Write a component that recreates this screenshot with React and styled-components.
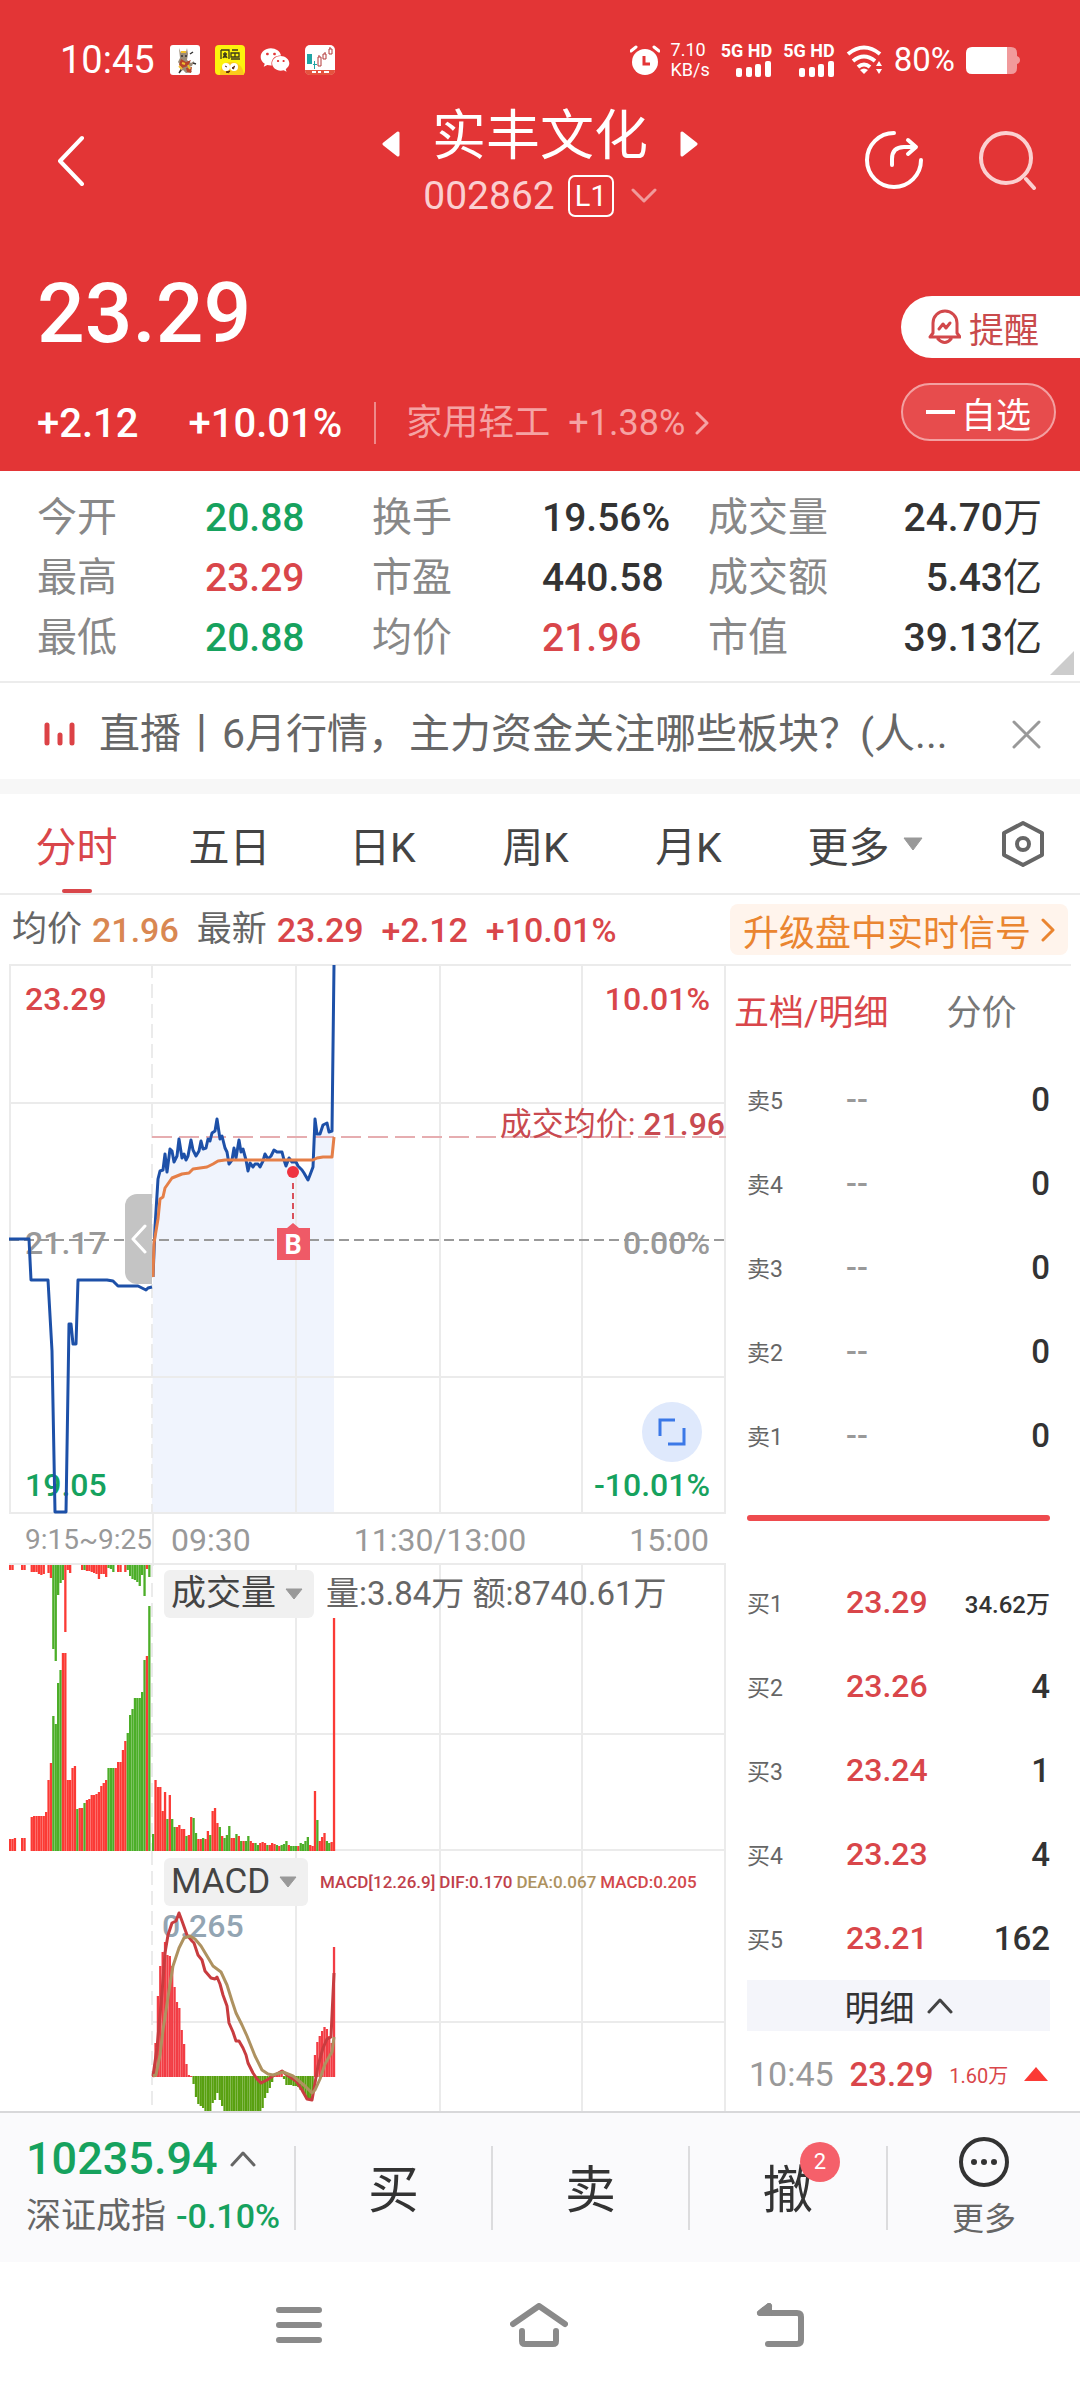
import React from 'react'
import styled, { createGlobalStyle } from 'styled-components'
import { FaWeixin } from 'react-icons/fa'

const RED = '#d9464a'
const GREEN = '#16a25e'
const UP = '#fb3a35'
const DOWN = '#4cae28'

const GlobalStyle = createGlobalStyle`
* {
  box-sizing: border-box;
}
body {
  margin: 0;
  background: #fff;
  color: #333;
  font-family: Roboto, "Noto Sans CJK SC", sans-serif;
}
button, select {
  font-family: inherit;
  border: none;
  background: none;
  padding: 0;
  margin: 0;
  color: inherit;
  cursor: pointer;
}
a {
  color: inherit;
  text-decoration: none;
}
svg {
  display: block;
  flex: none;
}
`

/* ---------- header ---------- */

const Header = styled.header`
background: #e33536;
color: #fff;
height: 471px;
`

const StatusBar = styled.div`
display: flex;
justify-content: space-between;
align-items: center;
height: 120px;
padding: 0 60px;
`

const StatusGroup = styled.div`
display: flex;
align-items: center;
gap: ${props => props.$gap}px;
`

const Clock = styled.span`
font-size: 38px;
line-height: 40px;
`

const Speed = styled.span`
display: flex;
flex-direction: column;
font-size: 18px;
line-height: 20px;
`

const Signal = styled.span`
display: flex;
flex-direction: column;
align-items: flex-end;
gap: 2px;
font-size: 18px;
font-weight: 700;
line-height: 16px;
`

const Battery = styled.span`
font-size: 33px;
line-height: 36px;
`

const TitleBar = styled.div`
display: grid;
grid-template-columns: 1fr auto 1fr;
align-items: center;
height: 116px;
margin-top: -18px;
padding: 0 42px;
`

const IconButton = styled.button`
display: flex;
justify-self: start;
`

const Titles = styled.div`
display: flex;
flex-direction: column;
align-items: center;
gap: 8px;
padding-top: 6px;
`

const NameRow = styled.div`
display: flex;
align-items: center;
gap: 32px;

svg {
  margin-top: 14px;
}
`

const StockName = styled.h1`
margin: 0;
font-size: 54px;
font-weight: 400;
line-height: 58px;
`

const CodeRow = styled.div`
display: flex;
align-items: center;
gap: 13px;
color: #fbcfd0;
font-size: 39px;
line-height: 44px;
`

const Level = styled.span`
border: 2px solid #fff;
border-radius: 7px;
color: #fff;
font-size: 29px;
line-height: 38px;
padding: 0 5px;
`

const Actions = styled.div`
display: flex;
justify-self: end;
gap: 54px;
`

const Quote = styled.section`
display: flex;
justify-content: space-between;
padding-left: 37px;
`

const PriceBlock = styled.div`
display: flex;
flex-direction: column;
padding-top: 50px;
`

const BigPrice = styled.div`
font-size: 84px;
font-weight: 500;
line-height: 92px;
`

const ChangeRow = styled.div`
display: flex;
align-items: center;
margin-top: 38px;
height: 50px;
font-size: 40px;
font-weight: 500;
gap: 50px;
`

const Sector = styled.a`
display: flex;
align-items: center;
gap: 18px;
margin-left: -18px;
padding-left: 30px;
border-left: 2px solid #ee8a8b;
color: #f5a3a4;
font-size: 36px;
font-weight: 400;
line-height: 42px;
`

const SectorChange = styled.span`
display: flex;
align-items: center;
gap: 10px;
`

const SideButtons = styled.div`
display: flex;
flex-direction: column;
align-items: flex-start;
gap: 25px;
padding-top: 78px;
`

const AlertButton = styled.button`
display: flex;
align-items: center;
gap: 8px;
width: 179px;
height: 62px;
padding-left: 27px;
border-radius: 31px 0 0 31px;
background: #fff;
color: #c94a4c;
font-size: 35px;
`

const WatchButton = styled.button`
display: flex;
align-items: center;
justify-content: center;
gap: 6px;
width: 155px;
height: 58px;
border: 2px solid #f3a0a1;
border-radius: 29px;
background: #e74c4d;
color: #fff;
font-size: 35px;
`

/* ---------- key figures ---------- */

const Stats = styled.dl`
position: relative;
display: grid;
grid-template-columns: 168fr 167fr 170fr 166fr 122fr 212fr;
margin: 0;
padding: 17px 38px 13px 37px;
border-bottom: 2px solid #ececec;
font-size: 40px;
line-height: 60px;
white-space: nowrap;
`

const StatLabel = styled.dt`
color: #888;
`

const StatValue = styled.dd`
margin: 0;
font-size: 39px;
font-weight: 500;
color: ${props => props.$color || '#333'};
text-align: ${props => (props.$right ? 'right' : 'left')};
`

const Unit = styled.span`
font-weight: 400;
`

const Corner = styled.svg`
position: absolute;
right: 6px;
bottom: 6px;
`

const News = styled.div`
display: flex;
align-items: center;
height: 111px;
padding: 6px 39px 0 43px;
border-bottom: 15px solid #f7f7f7;
color: #666;
`

const NewsLink = styled.a`
flex: 1;
margin-left: 23px;
font-size: 41px;
line-height: 56px;
white-space: nowrap;
`

/* ---------- chart tabs ---------- */

const Tabs = styled.nav`
display: grid;
grid-template-columns: repeat(5, 153fr) 201fr 114fr;
align-items: stretch;
height: 101px;
border-bottom: 2px solid #ececec;
`

const Tab = styled.button`
position: relative;
display: flex;
align-items: center;
justify-content: center;
gap: 12px;
color: ${props => (props.$active ? RED : '#444')};
font-size: 41px;

&::after {
  content: '';
  display: ${props => (props.$active ? 'block' : 'none')};
  position: absolute;
  left: 50%;
  bottom: 0;
  width: 30px;
  height: 4px;
  margin-left: -15px;
  border-radius: 2px;
  background: ${RED};
}
`

const InfoRow = styled.div`
display: flex;
justify-content: space-between;
align-items: center;
height: 69px;
padding: 0 12px;
`

const Averages = styled.div`
display: flex;
align-items: center;
gap: 18px;
white-space: nowrap;
`

const Pair = styled.span`
display: flex;
gap: 10px;
color: #666;
font-size: 35px;
line-height: 48px;
`

const Num = styled.span`
color: ${props => props.$color};
font-size: 34px;
font-weight: 500;
line-height: 48px;
`

const Promo = styled.a`
display: flex;
align-items: center;
gap: 10px;
height: 51px;
padding: 0 13px;
border-radius: 8px;
background: #fff4ec;
color: #ea8530;
font-size: 36px;
white-space: nowrap;
`

/* ---------- charts ---------- */

const Main = styled.main`
display: grid;
grid-template-columns: 717fr 345fr;
padding: 0 9px;
`

const Charts = styled.div`
min-width: 0;
`

const Panel = styled.section`
position: relative;
height: ${props => props.$height}px;
overflow: hidden;
`

const Plot = styled.svg`
width: 100%;
height: 100%;
`

const Lines = styled(Plot)`
position: absolute;
top: 0;
left: 0;
`

const Mark = styled.span`
position: absolute;
top: ${props => props.$top}px;
left: ${props => (props.$left === undefined ? 'auto' : props.$left + 'px')};
right: ${props => (props.$right === undefined ? 'auto' : props.$right + 'px')};
color: ${props => props.$color};
font-size: 32px;
font-weight: 500;
line-height: 40px;
white-space: nowrap;
`

const Drawer = styled.button`
position: absolute;
top: 230px;
left: 116px;
display: flex;
align-items: center;
justify-content: center;
width: 27px;
height: 90px;
border-radius: 12px 0 0 12px;
background: #c4c4c4;
`

const Expand = styled.button`
position: absolute;
top: 438px;
right: 24px;
display: flex;
align-items: center;
justify-content: center;
width: 60px;
height: 60px;
border-radius: 50%;
background: #dfe9fc;
`

const TimeAxis = styled.div`
display: grid;
grid-template-columns: 143fr 574fr;
height: 49px;
color: #999;
line-height: 52px;
font-size: 32px;
`

const AuctionTime = styled.span`
padding-left: 16px;
border-right: 2px solid #ececec;
font-size: 28px;
`

const TradeTimes = styled.span`
display: flex;
justify-content: space-between;
padding: 0 17px;
`

const Legend = styled.div`
position: absolute;
top: 7px;
left: 155px;
display: flex;
align-items: center;
gap: 12px;
white-space: nowrap;
`

const Picker = styled.label`
display: flex;
align-items: center;
gap: 8px;
height: 48px;
padding: 0 11px 0 7px;
border-radius: 6px;
background: #f0f0f0;
color: #444;
`

const Select = styled.select`
appearance: none;
font-size: 35px;
line-height: 48px;
`

const LegendText = styled.span`
color: #666;
font-size: 33px;
line-height: 48px;
`

const SmallLegend = styled.span`
display: flex;
gap: 4px;
font-size: 17px;
font-weight: 500;
`

const Tint = styled.span`
color: ${props => props.$color};
`

/* ---------- order book ---------- */

const Book = styled.aside`
border-top: 2px solid #ececec;
`

const BookTabs = styled.div`
display: flex;
gap: 58px;
height: 91px;
padding: 0 0 4px 8px;
`

const BookTab = styled.button`
color: ${props => (props.$active ? RED : '#777')};
font-size: 35px;
white-space: nowrap;
`

const BookBody = styled.div`
padding: 0 21px;
`

const Levels = styled.table`
width: 100%;
table-layout: fixed;
border-collapse: collapse;
`

const LevelName = styled.th`
width: 99px;
height: 84px;
padding: 0;
color: #666;
font-size: 23px;
font-weight: 400;
text-align: left;
`

const LevelPrice = styled.td`
padding: 0;
color: ${props => (props.$empty ? '#999' : RED)};
font-size: 32px;
font-weight: 500;
`

const LevelSize = styled.td`
padding: 0;
font-size: ${props => (props.$small ? 24 : 33)}px;
font-weight: 500;
text-align: right;
white-space: nowrap;
`

const Ratio = styled.div`
height: 6px;
margin: 38px 0 39px;
border-radius: 3px;
background: #ee4b4e;
`

const DetailToggle = styled.button`
display: flex;
align-items: center;
justify-content: center;
gap: 12px;
width: 100%;
height: 51px;
background: #f4f5fa;
font-size: 35px;
`

const Trade = styled.div`
display: flex;
align-items: center;
justify-content: space-between;
height: 80px;
padding: 6px 2px 0;
color: ${RED};
font-size: 20px;
`

const TradeTime = styled.span`
color: #999;
font-size: 34px;
`

const TradePrice = styled.span`
font-size: 33px;
font-weight: 500;
`

/* ---------- bottom ---------- */

const Toolbar = styled.footer`
display: grid;
grid-template-columns: 294fr 197fr 197fr 198fr 194fr;
align-items: center;
height: 151px;
border-top: 2px solid #d8d8da;
background: #fafafc;
`

const Index = styled.a`
display: flex;
flex-direction: column;
gap: 8px;
padding-left: 26px;
white-space: nowrap;
`

const IndexValue = styled.span`
display: flex;
align-items: center;
gap: 12px;
color: ${GREEN};
font-size: 45px;
font-weight: 500;
line-height: 50px;
`

const IndexName = styled.span`
color: #666;
font-size: 35px;
line-height: 48px;
`

const IndexChange = styled.span`
margin-left: 10px;
color: ${GREEN};
font-size: 34px;
font-weight: 500;
`

const TradeButton = styled.button`
position: relative;
height: 84px;
padding-bottom: 4px;
border-left: 2px solid #dcdcde;
font-size: 51px;
`

const Badge = styled.span`
position: absolute;
top: -4px;
left: 50%;
width: 40px;
height: 40px;
margin-left: 12px;
border-radius: 50%;
background: #f5606a;
color: #fff;
font-size: 22px;
line-height: 40px;
`

const MoreButton = styled.button`
display: flex;
flex-direction: column;
align-items: center;
justify-content: center;
gap: 11px;
height: 84px;
border-left: 2px solid #dcdcde;
color: #666;
font-size: 32px;
line-height: 40px;
`

const SystemNav = styled.nav`
display: flex;
justify-content: center;
align-items: center;
gap: 188px;
height: 126px;
`

/* ---------- data ---------- */

const stats = [
  ['今开', '20.88', GREEN], ['换手', '19.56%'], ['成交量', '24.70', null, '万'],
  ['最高', '23.29', RED], ['市盈', '440.58'], ['成交额', '5.43', null, '亿'],
  ['最低', '20.88', GREEN], ['均价', '21.96', RED], ['市值', '39.13', null, '亿'],
]

const tabs = ['分时', '五日', '日K', '周K', '月K']

const asks = [['卖5'], ['卖4'], ['卖3'], ['卖2'], ['卖1']]
const bids = [
  ['买1', '23.29', '34.62万'],
  ['买2', '23.26', '4'],
  ['买3', '23.24', '1'],
  ['买4', '23.23', '4'],
  ['买5', '23.21', '162'],
]

const auctionLine = '0,275 20,275 22,316 39,316 43,387 46,548 57,548 60,360 62,360 64,380 67,380 69,316 98,316 104,317 109,322 129,322 137,326 139,324 143,323'
const priceLine = '144,313 146,263 149,215 151,207 154,206 156,190 158,208 161,185 163,187 165,198 168,192 170,175 173,194 175,190 177,196 179,192 182,176 184,186 187,192 190,187 192,177 194,185 197,184 199,175 201,177 203,169 206,167 208,155 211,175 213,172 216,184 218,188 220,200 223,196 225,184 227,194 230,176 232,188 234,185 237,196 239,207 241,199 244,203 246,200 249,200 251,203 254,197 256,190 259,195 262,192 265,186 268,188 273,188 275,196 277,202 280,194 283,198 287,198 289,202 293,206 295,209 299,216 301,211 304,203 306,155 308,170 311,170 314,161 318,159 320,168 323,167 325,1'
const averageLine = '144,313 145,279 149,255 151,235 154,233 156,224 163,214 173,210 180,209 184,205 198,203 204,200 209,197 216,196 304,196 308,194 314,193 323,193 325,173'
const difLine = '144,225 148,197 153,142 156,102 159,84 163,72 167,70 170,62 173,70 178,84 183,90 185,92 189,104 193,109 196,120 202,127 206,128 208,126 211,133 214,144 218,155 220,172 224,181 227,190 230,190 234,197 237,204 239,212 244,222 248,228 252,232 258,229 264,225 273,220 278,224 287,230 293,239 298,248 303,249 306,232 309,215 314,197 318,188 322,186 325,122'
const deaLine = '144,225 147,224 151,204 154,179 158,153 161,133 164,115 170,97 175,87 181,85 186,88 192,95 198,105 204,115 212,121 218,134 223,150 227,162 233,174 238,185 246,205 253,219 259,223 264,224 274,221 284,225 290,230 296,235 303,242 306,239 311,228 316,213 320,206 323,201 325,186'

// positive = red bar, negative = green bar
const auctionVolume = [12, 12, 13, 0, 0, 13, 13, 0, 0, 34, 35, 35, 35, 35, 35, 39, 71, 88, -135, -127, -168, -181, 198, 198, 71, 71, 83, 85, -42, 43, 43, -48, 51, 52, 56, 56, 57, 59, 65, 68, 71, -83, -83, -83, 83, 89, 89, 101, 110, -118, -136, -142, -153, -153, -153, -159, -191, 195, -245]
const auctionUnmatched = [5, 5, 0, 0, 0, 5, 5, 0, 0, 7, 7, 7, 9, 10, 9, 0, 8, 13, -84, -96, -30, -18, -15, 67, 5, 8, 0, 0, 0, 0, 5, -5, 6, 6, 7, 8, 9, 14, 9, 9, 12, -3, -4, -7, 0, 7, 7, 0, 7, -5, -11, -14, -15, -17, -21, -10, -31, 4, -12]
const volume = [-17, 71, 64, 64, 40, 59, -32, 56, -32, -24, 24, 26, 22, 22, -15, 16, 34, -33, -18, 12, 12, -13, 12, 20, -16, 40, 43, 28, -24, 15, -13, -16, -25, 13, 13, -17, 15, -10, 10, -10, -15, 10, 8, -8, -6, 8, 9, 8, -6, 6, 8, 7, -6, 5, -6, -7, -10, 6, -5, -5, -5, 5, -8, -7, -10, -14, 6, 5, 60, -31, 10, 14, 18, -10, -8, 9, 233]
const macd = [2, 34, 81, 111, 125, 135, 122, 121, 111, 90, 75, 69, 47, 33, 13, 2, 1, -8, -21, -28, -30, -32, -36, -38, -36, -27, -24, -17, -24, -30, -35, -40, -40, -40, -40, -40, -40, -40, -40, -40, -40, -40, -40, -40, -40, -37, -32, -22, -17, -12, -6, 2, 3, 4, 3, -3, -9, -9, -9, -10, -10, -11, -14, -17, -21, -23, -24, -19, 22, 35, 41, 46, 50, 48, 41, 34, 130]

/* ---------- pieces ---------- */

const Chevron = ({ d, width, height, color, stroke = 3 }) => (
  <svg width={width} height={height} fill="none" stroke={color} strokeWidth={stroke} strokeLinecap="round" strokeLinejoin="round">
    <path d={d} />
  </svg>
)

const Caret = () => (
  <svg width="18" height="12"><path d="M1 1h16L9 11z" fill="#999" stroke="#999" strokeLinejoin="round" /></svg>
)

const SignalBars = () => (
  <Signal>
    5G HD
    <svg width="36" height="16" fill="#fff">
      <rect x="0" y="7" width="6" height="9" rx="2" />
      <rect x="10" y="6" width="6" height="10" rx="2" />
      <rect x="19" y="3" width="6" height="13" rx="2" />
      <rect x="29" y="0" width="6" height="16" rx="2" />
    </svg>
  </Signal>
)

const Grid = ({ height, rows }) => (
  <g stroke="#ebebeb" strokeWidth="2">
    {rows.map(y => <path key={y[1]} d={`M${y[0]} ${y[1]}H717`} />)}
    {[287, 431, 573, 716].map(x => <path key={x} d={`M${x} 0V${height}`} />)}
    <path d={`M143 0V${height}`} strokeDasharray="14 6" />
  </g>
)

const Bars = ({ values, start, step, base, hang, up = UP, down = DOWN }) =>
  values.map((v, i) => v !== 0 && (
    <rect
      key={i}
      x={start + i * step}
      width="2.3"
      y={hang ? base : base - Math.abs(v)}
      height={Math.abs(v)}
      fill={v > 0 ? up : down}
    />
  ))

const StatusIcons = () => (
  <StatusBar>
    <StatusGroup $gap={15}>
      <Clock>10:45</Clock>
      <svg width="30" height="30">
        <rect width="30" height="30" rx="3" fill="#fff" />
        <path d="M9 3l2 5 5-1 1-4 1 6-1 6 4 3 3-2-2 5-3 1 3 5-6 1-3-3-4 3 2-7-3-4 2-4z" fill="#9b8b78" />
        <path d="M11 14l5 3 5-2-3 6-6 2-3-3zM16 23l6-1-1 6-4-1z" fill="#b5442c" />
        <path d="M12 18l3 1M18 20l2 4M9 21l3 3M11 7h5" stroke="#f0c030" strokeWidth="2" />
        <path d="M20 9l3-2M9 28l2-3M11 11h2M15 11h2M23 18l3 1" stroke="#333" strokeWidth="1.5" />
      </svg>
      <svg width="30" height="30">
        <rect width="30" height="30" rx="4" fill="#fdf30d" />
        <path d="M6 5v9M6 5h8v9M10 7v6M8 9h4M10 9l-2 4M10 9l2 4M17 5h6M16 8h8v4h-8zM20 8v4M16 14h9" fill="none" stroke="#3d3a1a" strokeWidth="1.3" />
        <path d="M5 30c0-9 4-13 11-13s12 4 13 13z" fill="#fbc91c" />
        <circle cx="11" cy="22" r="4" fill="#fff" />
        <circle cx="19" cy="22" r="4" fill="#fff" />
        <path d="M10 21l2 1M20 21l-3 2 2 1M11 27q3 2 4-1z" stroke="#5a2a10" fill="#5a2a10" />
      </svg>
      <FaWeixin size={30} />
      <svg width="30" height="30">
        <rect width="30" height="30" rx="5" fill="#fff" />
        <path d="M0 25h30q0 5-5 5H5q-5 0-5-5z" fill="#e5533f" />
        <path d="M7 27h4M13 27h3M19 27h5" stroke="#fff" strokeWidth="2" />
        <path d="M2 9h5v10H2zM9 16h1v8H9zM8 19h4v1H8z" fill="#20a5a5" />
        <path d="M13 12h3v9h-3zM18 9h3v5h-3zM24 4h3v5h-3zM20 7v2M25 2v2M14 10v2" fill="none" stroke="#b33b3b" />
      </svg>
    </StatusGroup>
    <StatusGroup $gap={11}>
      <svg width="30" height="30">
        <circle cx="15" cy="17" r="13" fill="#fff" />
        <path d="M1 6l5-4M29 6l-5-4" stroke="#fff" strokeWidth="3" strokeLinecap="round" />
        <path d="M14 11v8h6" fill="none" stroke="#e33536" strokeWidth="3" />
      </svg>
      <Speed>
        <span>7.10</span>
        <span>KB/s</span>
      </Speed>
      <SignalBars />
      <SignalBars />
      <svg width="37" height="30" fill="none" stroke="#fff" strokeWidth="4">
        <path d="M2 9q16-13 32 0M7 16q11-9 22 0" />
        <path d="M12 22q6-5 12 0" />
        <path d="M14 25q4-3 8 0l-4 4z" fill="#fff" stroke="none" />
        <path d="M30 21l3-5 3 5zM30 24l3 5 3-5z" fill="#fff" stroke="none" />
      </svg>
      <Battery>80%</Battery>
      <svg width="54" height="27">
        <path d="M40 0h5q6 0 6 6v3q3 1 3 4t-3 4v4q0 6-6 6h-5z" fill="#f19a9b" />
        <path d="M6 0h35v27H6q-6 0-6-6V6q0-6 6-6z" fill="#fff" />
      </svg>
    </StatusGroup>
  </StatusBar>
)

const Top = () => (
  <Header>
    <StatusIcons />
    <TitleBar>
      <IconButton aria-label="返回">
        <Chevron d="M40 4L18 27L40 50" width={44} height={52} color="#fff" stroke={4} />
      </IconButton>
      <Titles>
        <NameRow>
          <svg width="18" height="26"><path d="M16 2v22L2 13z" fill="#fff" stroke="#fff" strokeWidth="3" strokeLinejoin="round" /></svg>
          <StockName>实丰文化</StockName>
          <svg width="18" height="26"><path d="M2 2v22l14-11z" fill="#fff" stroke="#fff" strokeWidth="3" strokeLinejoin="round" /></svg>
        </NameRow>
        <CodeRow>
          002862
          <Level>L1</Level>
          <Chevron d="M6 3l11 11L28 3" width={30} height={18} color="#f09a9b" />
        </CodeRow>
      </Titles>
      <Actions>
        <IconButton aria-label="分享">
          <svg width="60" height="60" fill="none" stroke="#fff" strokeWidth="4" strokeLinecap="round" strokeLinejoin="round">
            <path d="M30 3A27 27 0 1 0 57 30" />
            <path d="M28 35v-6q0-12 12-12h11M44 10l8 7-8 7" />
          </svg>
        </IconButton>
        <IconButton aria-label="搜索">
          <svg width="60" height="60" fill="none" stroke="#fbd0d0" strokeWidth="4" strokeLinecap="round">
            <circle cx="28" cy="28" r="25" />
            <path d="M48 49l8 9" />
          </svg>
        </IconButton>
      </Actions>
    </TitleBar>
    <Quote>
      <PriceBlock>
        <BigPrice>23.29</BigPrice>
        <ChangeRow>
          <span>+2.12</span>
          <span>+10.01%</span>
          <Sector href="#sector">
            家用轻工
            <SectorChange>
              +1.38%
              <Chevron d="M2 2l10 10L2 22" width={14} height={24} color="#f5a3a4" />
            </SectorChange>
          </Sector>
        </ChangeRow>
      </PriceBlock>
      <SideButtons>
        <AlertButton>
          <svg width="33" height="36" fill="none" stroke="#d2484b" strokeWidth="3" strokeLinejoin="round" strokeLinecap="round">
            <path d="M2 28l3-4V14a12 12 0 0 1 24 0v10l3 4zM10 30q7 7 13 0" />
            <path d="M11 20l4-5 3 4 4-5" />
          </svg>
          提醒
        </AlertButton>
        <WatchButton>
          <svg width="29" height="4"><path d="M0 0h29v4H0z" fill="#fff" /></svg>
          自选
        </WatchButton>
      </SideButtons>
    </Quote>
  </Header>
)

const PriceChart = () => (
  <Panel $height={550}>
    <Plot viewBox="0 0 717 550" preserveAspectRatio="none" fill="none">
      <polygon points={`143,550 ${priceLine} 325,550`} fill="#f0f4fd" />
      <Grid height={550} rows={[[0, 1], [0, 139], [0, 413], [0, 549]]} />
      <path d="M1 0V550" stroke="#ebebeb" strokeWidth="2" />
      <path d="M0 276H717" stroke="#999" strokeWidth="2" strokeDasharray="10 5" />
      <path d="M143 173H717" stroke="#e6adb0" strokeWidth="2" strokeDasharray="20 7" />
    </Plot>
    <Mark $top={15} $left={16} $color={RED}>23.29</Mark>
    <Mark $top={259} $left={16} $color="#999">21.17</Mark>
    <Mark $top={501} $left={16} $color={GREEN}>19.05</Mark>
    <Mark $top={15} $right={16} $color={RED}>10.01%</Mark>
    <Mark $top={259} $right={16} $color="#999">0.00%</Mark>
    <Mark $top={501} $right={16} $color={GREEN}>-10.01%</Mark>
    <Mark $top={140} $right={1} $color="#c94a50"><Unit>成交均价: </Unit>21.96</Mark>
    <Lines viewBox="0 0 717 550" preserveAspectRatio="none" fill="none" strokeWidth="3" strokeLinejoin="round">
      <polyline points={auctionLine} stroke="#1d50a8" />
      <polyline points={priceLine} stroke="#1d50a8" />
      <polyline points={averageLine} stroke="#e57f48" />
      <path d="M284 219V256" stroke="#d9505a" strokeWidth="2" strokeDasharray="6 4" />
      <circle cx="284" cy="208" r="6" fill="#ef3340" />
      <path d="M268 264h10l6-5 6 5h11v32h-33z" fill="#ef5a67" />
      <text x="284" y="290" fill="#fff" fontSize="27" fontWeight="700" textAnchor="middle">B</text>
    </Lines>
    <Drawer aria-label="收起集合竞价">
      <Chevron d="M15 2L3 15L15 28" width={17} height={30} color="#fff" />
    </Drawer>
    <Expand aria-label="全屏">
      <svg width="30" height="30" fill="none" stroke="#3b78e7" strokeWidth="3">
        <path d="M18 3H3v16M27 11v16H11" />
      </svg>
    </Expand>
  </Panel>
)

const VolumeChart = () => (
  <Panel $height={288}>
    <Plot viewBox="0 0 717 288" preserveAspectRatio="none">
      <Grid height={288} rows={[[0, 1], [143, 171], [143, 287]]} />
      <Bars values={auctionUnmatched} start={0} step={2.4} base={2} hang />
      <Bars values={auctionVolume} start={0} step={2.4} base={288} />
      <Bars values={volume} start={143} step={2.38} base={288} />
    </Plot>
    <Legend>
      <Picker>
        <Select aria-label="指标一"><option>成交量</option></Select>
        <Caret />
      </Picker>
      <LegendText>量:3.84万 额:8740.61万</LegendText>
    </Legend>
  </Panel>
)

const MacdChart = () => (
  <Panel $height={260}>
    <Plot viewBox="0 0 717 260" preserveAspectRatio="none" fill="none">
      <Grid height={260} rows={[[143, 171]]} />
      <Bars values={macd.map(v => Math.max(v, 0))} start={143} step={2.38} base={226} up="#f23c44" />
      <Bars values={macd.map(v => Math.min(v, 0))} start={143} step={2.38} base={225} hang down="#58a010" />
    </Plot>
    <Mark $top={55} $left={153} $color="#93a5b3">0.265</Mark>
    <Lines viewBox="0 0 717 260" preserveAspectRatio="none" fill="none" strokeWidth="3" strokeLinejoin="round">
      <polyline points={difLine} stroke="#c83c3f" />
      <polyline points={deaLine} stroke="#ae9260" />
    </Lines>
    <Legend>
      <Picker>
        <Select aria-label="指标二"><option>MACD</option></Select>
        <Caret />
      </Picker>
      <SmallLegend>
        <Tint $color="#c0404a">MACD[12.26.9]</Tint>
        <Tint $color="#c0404a">DIF:0.170</Tint>
        <Tint $color="#ae9260">DEA:0.067</Tint>
        <Tint $color="#d2484b">MACD:0.205</Tint>
      </SmallLegend>
    </Legend>
  </Panel>
)

const LevelTable = ({ rows }) => (
  <Levels>
    <tbody>
      {rows.map(([name, price, size = '0']) => (
        <tr key={name}>
          <LevelName scope="row">{name}</LevelName>
          <LevelPrice $empty={!price}>{price || '--'}</LevelPrice>
          <LevelSize $small={size.length > 4}>{size}</LevelSize>
        </tr>
      ))}
    </tbody>
  </Levels>
)

const OrderBook = () => (
  <Book>
    <BookTabs>
      <BookTab $active>五档/明细</BookTab>
      <BookTab>分价</BookTab>
    </BookTabs>
    <BookBody>
      <LevelTable rows={asks} />
      <Ratio />
      <LevelTable rows={bids} />
      <DetailToggle>
        明细
        <Chevron d="M2 15L13 3L24 15" width={26} height={18} color="#444" />
      </DetailToggle>
      <Trade>
        <TradeTime>10:45</TradeTime>
        <TradePrice>23.29</TradePrice>
        <span>1.60万</span>
        <svg width="24" height="14"><path d="M12 0l12 14H0z" fill={UP} /></svg>
      </Trade>
    </BookBody>
  </Book>
)

const Bottom = () => (
  <>
    <Toolbar>
      <Index href="#index">
        <IndexValue>
          10235.94
          <Chevron d="M2 15L13 3L24 15" width={26} height={18} color="#666" />
        </IndexValue>
        <IndexName>
          深证成指<IndexChange>-0.10%</IndexChange>
        </IndexName>
      </Index>
      <TradeButton>买</TradeButton>
      <TradeButton>卖</TradeButton>
      <TradeButton>
        撤
        <Badge>2</Badge>
      </TradeButton>
      <MoreButton>
        <svg width="52" height="52">
          <circle cx="26" cy="26" r="23" fill="none" stroke="#333" strokeWidth="4" />
          <circle cx="16" cy="26" r="3" fill="#333" />
          <circle cx="26" cy="26" r="3" fill="#333" />
          <circle cx="36" cy="26" r="3" fill="#333" />
        </svg>
        更多
      </MoreButton>
    </Toolbar>
    <SystemNav>
      <IconButton aria-label="最近任务">
        <svg width="46" height="38" stroke="#8a8a8a" strokeWidth="6" strokeLinecap="round">
          <path d="M3 4h40M3 19h40M3 34h40" />
        </svg>
      </IconButton>
      <IconButton aria-label="主屏幕">
        <svg width="58" height="44" fill="none" stroke="#8a8a8a" strokeWidth="6" strokeLinecap="round" strokeLinejoin="round">
          <path d="M3 21L29 3l26 18M12 28v10q0 3 3 3h28q3 0 3-3V28" />
        </svg>
      </IconButton>
      <IconButton aria-label="后退">
        <svg width="48" height="44" fill="none" stroke="#8a8a8a" strokeWidth="6" strokeLinecap="round" strokeLinejoin="round">
          <path d="M13 3L4 10h37q4 0 4 4v23q0 4-4 4H12" />
          <path d="M13 3v7H4z" fill="#8a8a8a" />
        </svg>
      </IconButton>
    </SystemNav>
  </>
)

const App = () => {
  return (
    <>
      <GlobalStyle />
      <Top />
      <Stats>
        {stats.map(([label, value, color, unit]) => (
          <React.Fragment key={label}>
            <StatLabel>{label}</StatLabel>
            <StatValue $color={color} $right={!!unit}>{value}{unit && <Unit>{unit}</Unit>}</StatValue>
          </React.Fragment>
        ))}
        <Corner width="24" height="24"><path d="M24 0v24H0z" fill="#ccc" /></Corner>
      </Stats>
      <News>
        <svg width="33" height="24" stroke="#dc4246" strokeWidth="5" strokeLinecap="round">
          <path d="M4 3v18M17 13v8M29 3v18" />
        </svg>
        <NewsLink href="#news">直播丨6月行情，主力资金关注哪些板块？(人...</NewsLink>
        <IconButton aria-label="关闭">
          <Chevron d="M2 2l25 25M27 2L2 27" width={29} height={29} color="#999" />
        </IconButton>
      </News>
      <Tabs>
        {tabs.map((name, i) => <Tab key={name} $active={i === 0}>{name}</Tab>)}
        <Tab>更多<svg width="22" height="14"><path d="M2 1h18l-9 12z" fill="#999" stroke="#999" strokeLinejoin="round" /></svg></Tab>
        <Tab aria-label="设置">
          <svg width="44" height="48" fill="none" stroke="#666" strokeWidth="4" strokeLinejoin="round">
            <path d="M22 3l19 10v22L22 45L3 35V13z" />
            <circle cx="22" cy="24" r="6" />
          </svg>
        </Tab>
      </Tabs>
      <InfoRow>
        <Averages>
          <Pair>均价<Num $color="#d98752">21.96</Num></Pair>
          <Pair>最新<Num $color={RED}>23.29</Num></Pair>
          <Num $color={RED}>+2.12</Num>
          <Num $color={RED}>+10.01%</Num>
        </Averages>
        <Promo href="#signal">
          升级盘中实时信号
          <Chevron d="M2 2l10 10L2 22" width={14} height={24} color="#ea8530" />
        </Promo>
      </InfoRow>
      <Main>
        <Charts>
          <PriceChart />
          <TimeAxis>
            <AuctionTime>9:15~9:25</AuctionTime>
            <TradeTimes>
              <span>09:30</span>
              <span>11:30/13:00</span>
              <span>15:00</span>
            </TradeTimes>
          </TimeAxis>
          <VolumeChart />
          <MacdChart />
        </Charts>
        <OrderBook />
      </Main>
      <Bottom />
    </>
  )
}

export default App
